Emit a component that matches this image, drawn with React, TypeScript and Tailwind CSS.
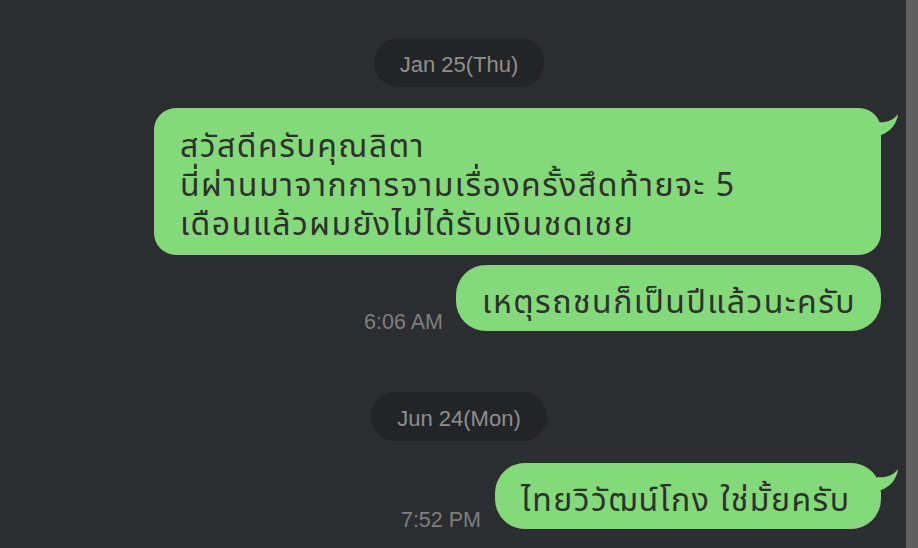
import React from "react";

const thai = "font-['Noto_Sans_Thai','Noto_Sans','DejaVu_Sans',sans-serif]";
const latin = "font-['Liberation_Sans',Arial,sans-serif]";

function Tail() {
    // little hook at the top-right corner of an outgoing bubble
    return (
        <svg
            className="absolute top-0 -right-[21px]"
            width="25"
            height="30"
            viewBox="0 0 25 30"
        >
            <path d="M0 14 C8 15 16 13 21 6 C20 16 13 24 4 27 L0 27 Z" fill="#84d97a" />
        </svg>
    );
}

function DatePill({ label }: { label: string }) {
    return (
        <div className="flex justify-center">
            <div
                className={`h-[49px] px-[26px] pt-[3px] rounded-full bg-[#232427] flex items-center text-[22px] text-[#8f8f8f] ${latin}`}
            >
                {label}
            </div>
        </div>
    );
}

function Time({ t }: { t: string }) {
    return (
        <span className={`text-[21.5px] leading-[21px] -mb-[2px] text-[#7f7f80] ${latin}`}>
            {t}
        </span>
    );
}

export default function App() {
    return (
        <div className="relative w-[918px] h-[548px] overflow-hidden bg-[#2c2d30]">
            <div className="flex flex-col pt-[38px]">
                <DatePill label="Jan 25(Thu)" />

                <div className="flex justify-end mt-[21px] pr-[37px]">
                    <div
                        className={`relative w-[727px] rounded-[22px] bg-[#84d97a] pl-[26px] pr-[20px] pt-[20px] pb-[10px] text-[32px] leading-[39px] tracking-[1.5px] text-[#2e302d] ${thai}`}
                    >
                        <div>สวัสดีครับคุณลิตา</div>
                        <div>นี่ผ่านมาจากการจามเรื่องครั้งสึดท้ายจะ 5</div>
                        <div>เดือนแล้วผมยังไม่ได้รับเงินชดเชย</div>
                        <Tail />
                    </div>
                </div>

                <div className="flex justify-end items-end gap-[13px] mt-[10px] pr-[37px]">
                    <Time t="6:06 AM" />
                    <div
                        className={`w-[425px] h-[66px] rounded-[30px] bg-[#84d97a] pl-[26px] pt-[9px] flex items-center text-[32px] tracking-[1.5px] text-[#2e302d] ${thai}`}
                    >
                        เหตุรถชนก็เป็นปีแล้วนะครับ
                    </div>
                </div>

                <div className="mt-[61px]">
                    <DatePill label="Jun 24(Mon)" />
                </div>

                <div className="flex justify-end items-end gap-[14px] mt-[22px] pr-[37px]">
                    <Time t="7:52 PM" />
                    <div
                        className={`relative w-[386px] h-[66px] rounded-[30px] bg-[#84d97a] pl-[26px] pt-[9px] flex items-center text-[32px] tracking-[1.5px] text-[#2e302d] ${thai}`}
                    >
                        ไทยวิวัฒน์โกง ใช่มั้ยครับ
                        <Tail />
                    </div>
                </div>
            </div>

            {/* scrollbar track */}
            <div className="absolute top-0 right-0 w-[12px] h-full bg-[#5f5f5f]" />
        </div>
    );
}
